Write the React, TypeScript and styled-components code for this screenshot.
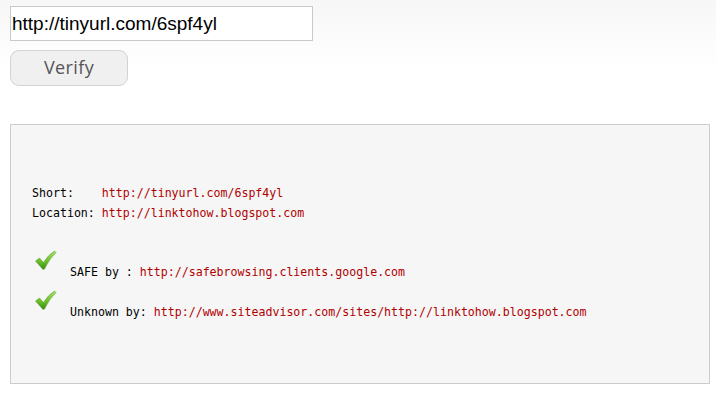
import styled, { createGlobalStyle } from "styled-components";

const GlobalStyle = createGlobalStyle`
    html, body {
        margin: 0;
        padding: 0;
        background: linear-gradient(#f7f7f7 0px, #ffffff 70px) no-repeat;
        background-color: #ffffff;
        min-height: 398px;
    }
`;

const Page = styled.div`
    display: flex;
    flex-direction: column;
    align-items: flex-start;
    padding: 6px 10px 0 10px;
`;

const UrlInput = styled.input`
    box-sizing: border-box;
    width: 303px;
    height: 35px;
    margin: 0;
    padding: 0 1px;
    border: 1px solid #c9c9c9;
    background: #ffffff;
    font-family: "Liberation Sans", Arial, sans-serif;
    font-size: 19px;
    color: #000;
    outline: none;
`;

const VerifyButton = styled.button`
    box-sizing: border-box;
    margin-top: 9px;
    width: 118px;
    height: 36px;
    border: 1px solid #d3d3d3;
    border-radius: 9px;
    background: #f0f0f0;
    color: #555;
    font-family: "Open Sans", "Liberation Sans", sans-serif;
    font-size: 18px;
    letter-spacing: 0.4px;
    padding: 0 0 2px 0;
`;

const Result = styled.div`
    box-sizing: border-box;
    margin-top: 38px;
    width: 700px;
    height: 260px;
    border: 1px solid #cccccc;
    background: #f6f6f6;
    padding: 58px 0 0 21px;
    font-family: "DejaVu Sans Mono", "Liberation Mono", monospace;
    font-size: 11.6px;
    color: #000;
`;

const Line = styled.div`
    line-height: 20px;
    white-space: pre;
`;

const Link = styled.span`
    color: #b10000;
`;

const Checks = styled.div`
    margin-top: 27px;
    display: flex;
    flex-direction: column;
`;

const CheckRow = styled.div`
    display: flex;
    align-items: flex-start;
    height: 40px;
`;

const CheckText = styled.div`
    padding-top: 12px;
    line-height: 20px;
    white-space: pre;
`;

const CheckIcon = () => (
    <svg width="22" height="21" viewBox="0 0 22 21" style={{ marginLeft: 3, marginRight: 13, flexShrink: 0 }}>
        <defs>
            <linearGradient id="chk" x1="0" y1="0" x2="0" y2="1">
                <stop offset="0" stopColor="#a6e06a" />
                <stop offset="0.55" stopColor="#6cc02d" />
                <stop offset="1" stopColor="#378a10" />
            </linearGradient>
        </defs>
        <path
            d="M0.5 11 L4.5 8 L8.5 12.5 Q13 5 19.5 1 L21 2.5 Q14.5 8.5 9.5 19 L8 19.5 Z"
            fill="url(#chk)"
            stroke="#4c9a20"
            strokeWidth="0.5"
        />
    </svg>
);

const App = () => {
    return (
        <Page>
            <GlobalStyle />
            <UrlInput defaultValue="http://tinyurl.com/6spf4yl" />
            <VerifyButton>Verify</VerifyButton>
            <Result>
                <Line>
                    {"Short:    "}<Link>http://tinyurl.com/6spf4yl</Link>
                </Line>
                <Line>
                    {"Location: "}<Link>http://linktohow.blogspot.com</Link>
                </Line>
                <Checks>
                    <CheckRow>
                        <CheckIcon />
                        <CheckText>
                            {"SAFE by : "}<Link>http://safebrowsing.clients.google.com</Link>
                        </CheckText>
                    </CheckRow>
                    <CheckRow>
                        <CheckIcon />
                        <CheckText>
                            {"Unknown by: "}<Link>http://www.siteadvisor.com/sites/http://linktohow.blogspot.com</Link>
                        </CheckText>
                    </CheckRow>
                </Checks>
            </Result>
        </Page>
    );
};

export default App;
